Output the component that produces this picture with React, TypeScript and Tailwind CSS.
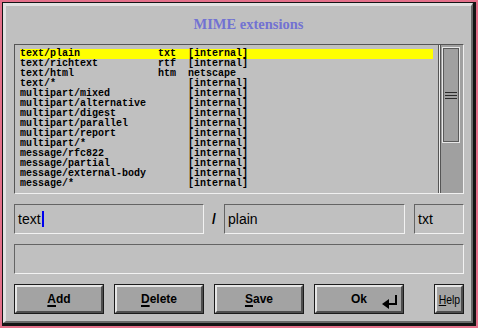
import React from "react";

type Mime = { type: string; ext: string; handler: string };

const mimes: Mime[] = [
  { type: "text/plain", ext: "txt", handler: "[internal]" },
  { type: "text/richtext", ext: "rtf", handler: "[internal]" },
  { type: "text/html", ext: "htm", handler: "netscape" },
  { type: "text/*", ext: "", handler: "[internal]" },
  { type: "multipart/mixed", ext: "", handler: "[internal]" },
  { type: "multipart/alternative", ext: "", handler: "[internal]" },
  { type: "multipart/digest", ext: "", handler: "[internal]" },
  { type: "multipart/parallel", ext: "", handler: "[internal]" },
  { type: "multipart/report", ext: "", handler: "[internal]" },
  { type: "multipart/*", ext: "", handler: "[internal]" },
  { type: "message/rfc822", ext: "", handler: "[internal]" },
  { type: "message/partial", ext: "", handler: "[internal]" },
  { type: "message/external-body", ext: "", handler: "[internal]" },
  { type: "message/*", ext: "", handler: "[internal]" },
];

const sans = "font-['Liberation_Sans',Arial,sans-serif]";

function Button({ label, width = "w-[90px]", children }: { label?: string; width?: string; children?: React.ReactNode }) {
  return (
    <div className={`${width} h-[30px] border border-[#1c1c1c]`}>
      <div className="relative h-full w-full flex items-center justify-center bg-[#a3a3a3] border-t-2 border-l-2 border-t-[#e6e6e6] border-l-[#e6e6e6] border-b-2 border-r-2 border-b-[#4e4e4e] border-r-[#4e4e4e]">
        {label && (
          <span className={`${sans} text-[12px] font-bold text-black leading-none`}>
            <span className="underline decoration-2 underline-offset-[2px]">{label[0]}</span>
            {label.slice(1)}
          </span>
        )}
        {children}
      </div>
    </div>
  );
}

function Field({ width, children }: { width: string; children?: React.ReactNode }) {
  return (
    <div className={`${width} h-[30px] flex items-center border border-t-[#646464] border-l-[#646464] border-b-[#f2f2f2] border-r-[#f2f2f2] pl-[3px] ${sans} text-[14px] text-black`}>
      {children}
    </div>
  );
}

export default function App() {
  return (
    <div className="w-[478px] h-[328px] bg-[#e4708a] p-[2px]">
      <div className="h-full w-full border-t border-l border-r-[3px] border-b-[3px] border-[#141414]">
        <div className="h-full w-full border-t-[3px] border-l-[3px] border-t-[#e2e2e2] border-l-[#e2e2e2] border-r-2 border-b-2 border-r-[#6a6a6a] border-b-[#6a6a6a] bg-[#c0c0c0] pl-[8px] pr-[7px] flex flex-col">
          {/* Title */}
          <div className="h-[38px] flex items-center justify-center pb-[1px] pl-[19px]">
            <span className="font-['Liberation_Serif','Times_New_Roman',serif] font-bold text-[14.5px] text-[#7272d2] leading-none">
              MIME extensions
            </span>
          </div>

          {/* List with scrollbar */}
          <div className="h-[150px] flex border border-t-[#555] border-l-[#555] border-b-[#f0f0f0] border-r-[#f0f0f0]">
            <div className="flex-1 border-r border-r-[#555] pt-[4px] px-[5px] font-['Liberation_Mono','Courier_New',monospace] font-bold text-[10px] leading-[10px] text-black">
              {mimes.map((m, i) => (
                <div key={m.type} className={`h-[10px] whitespace-pre ${i === 0 ? "bg-[#ffff00]" : ""}`}>
                  {m.type.padEnd(23, " ") + m.ext.padEnd(5, " ") + m.handler}
                </div>
              ))}
            </div>
            <div className="w-[1px] bg-[#ececec]" />
            <div className="w-[23px] border-l border-l-[#555] bg-[#a0a0a0] pl-[1px] pt-[2px]">
              <div className="w-[18px] h-[96px] border border-[#e8e8e8] shadow-[inset_1px_1px_0_#5a5a5a,inset_-1px_-1px_0_#5a5a5a] flex flex-col items-center justify-center gap-[2px]">
                <div className="w-[12px] h-[1px] bg-[#2a2a2a]" />
                <div className="w-[12px] h-[1px] bg-[#2a2a2a]" />
                <div className="w-[12px] h-[1px] bg-[#2a2a2a]" />
              </div>
            </div>
          </div>

          {/* Inputs */}
          <div className="mt-[10px] flex">
            <Field width="w-[190px]">
              <span>text</span>
              <span className="w-[2px] h-[16px] bg-[#0000ee] ml-[1px]" />
            </Field>
            <div className={`w-[20px] h-[30px] flex items-center justify-center ${sans} font-bold text-[14px] text-black`}>/</div>
            <Field width="w-[181px]">plain</Field>
            <div className="w-[9px]" />
            <Field width="w-[50px]">txt</Field>
          </div>

          {/* Status */}
          <div className="mt-[10px] h-[30px] border border-t-[#646464] border-l-[#646464] border-b-[#f2f2f2] border-r-[#f2f2f2]" />

          {/* Buttons */}
          <div className="mt-[10px] flex gap-[10px]">
            <Button label="Add" />
            <Button label="Delete" />
            <Button label="Save" />
            <Button>
              <span className={`${sans} text-[12px] font-bold text-black leading-none`}>Ok</span>
              <svg className="absolute right-[3px] top-[8px]" width="16" height="14" viewBox="0 0 16 14">
                <rect x="13" y="0" width="2" height="10" fill="#000" />
                <rect x="5" y="8" width="10" height="2" fill="#000" />
                <polygon points="0,9 7,4 7,14" fill="#000" />
              </svg>
            </Button>
            <div className="ml-[20px]">
              <Button width="w-[30px]">
                <span className={`${sans} text-[13px] text-black leading-none inline-block scale-x-[0.8]`}>
                  <span className="underline">H</span>elp
                </span>
              </Button>
            </div>
          </div>
        </div>
      </div>
    </div>
  );
}
